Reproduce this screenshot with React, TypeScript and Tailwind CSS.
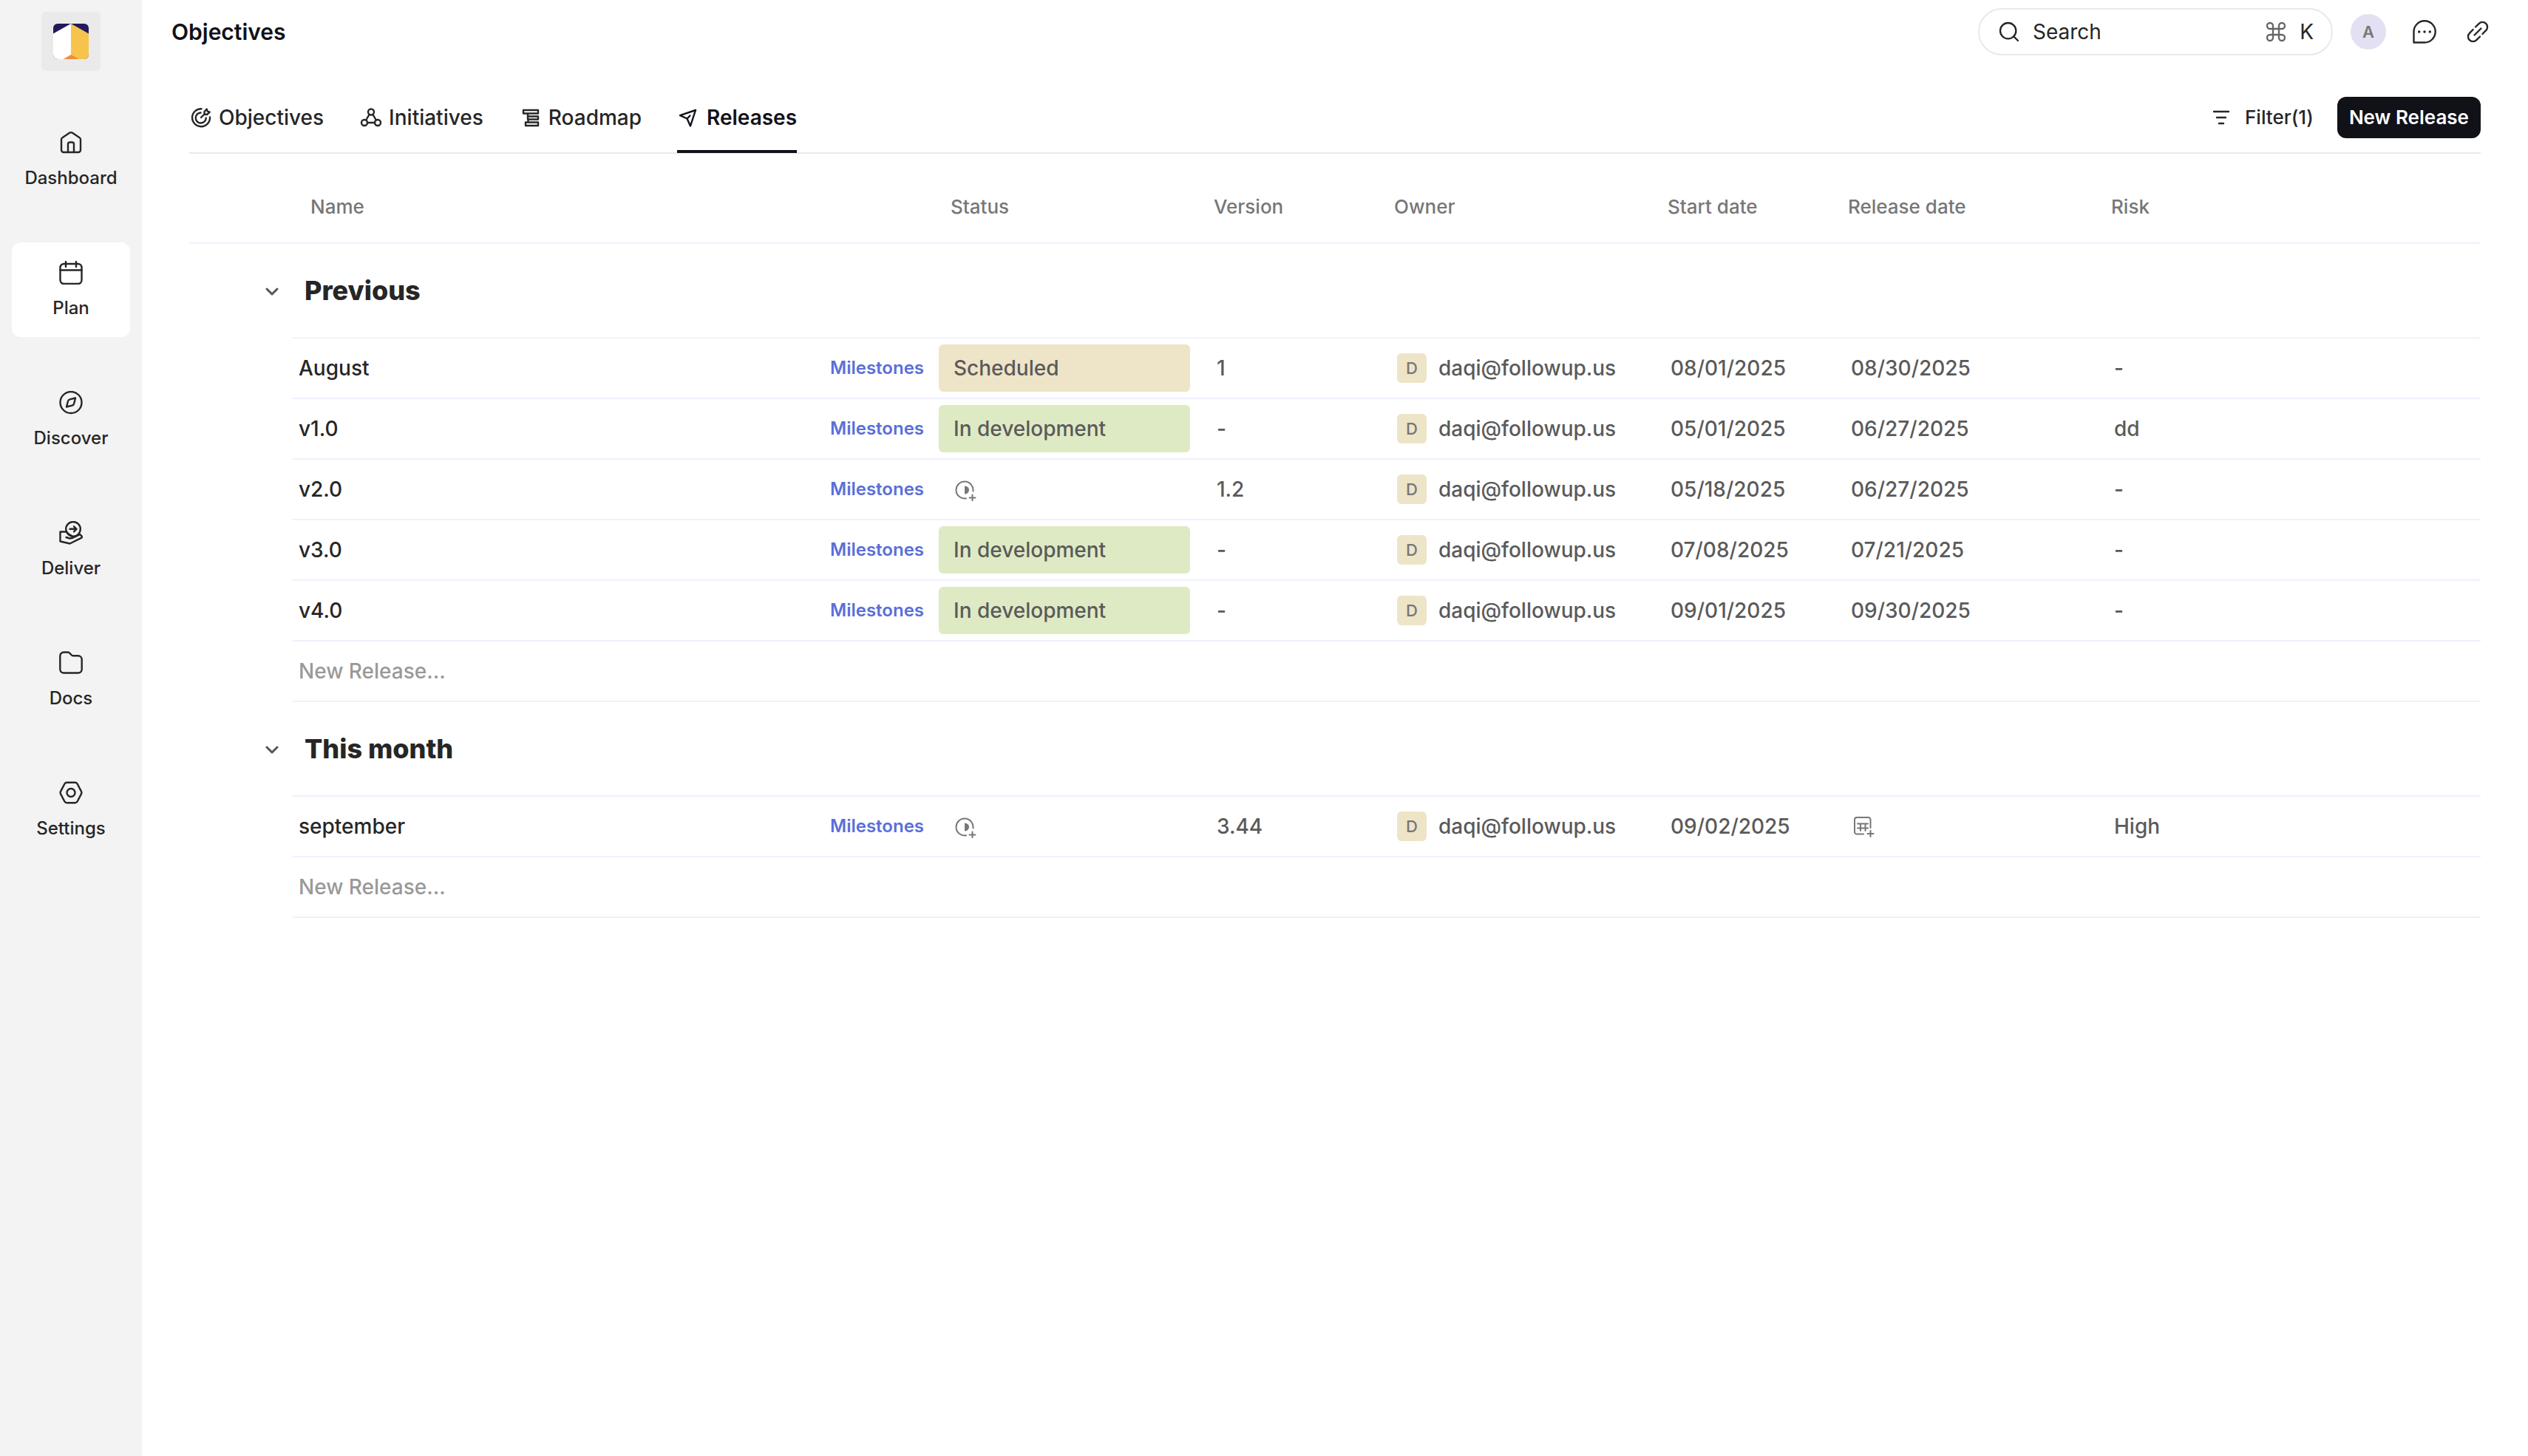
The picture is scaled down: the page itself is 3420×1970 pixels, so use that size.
import type { ReactNode } from 'react';
import { Command, Search } from 'lucide-react';

type Status = 'Scheduled' | 'In development' | null;

interface Release {
  name: string;
  status: Status;
  version: string;
  owner: string;
  start: string;
  release: string | null;
  risk: string;
}

const OWNER = 'daqi@followup.us';

const groups: { title: string; releases: Release[] }[] = [
  {
    title: 'Previous',
    releases: [
      { name: 'August', status: 'Scheduled', version: '1', owner: OWNER, start: '08/01/2025', release: '08/30/2025', risk: '-' },
      { name: 'v1.0', status: 'In development', version: '-', owner: OWNER, start: '05/01/2025', release: '06/27/2025', risk: 'dd' },
      { name: 'v2.0', status: null, version: '1.2', owner: OWNER, start: '05/18/2025', release: '06/27/2025', risk: '-' },
      { name: 'v3.0', status: 'In development', version: '-', owner: OWNER, start: '07/08/2025', release: '07/21/2025', risk: '-' },
      { name: 'v4.0', status: 'In development', version: '-', owner: OWNER, start: '09/01/2025', release: '09/30/2025', risk: '-' },
    ],
  },
  {
    title: 'This month',
    releases: [
      { name: 'september', status: null, version: '3.44', owner: OWNER, start: '09/02/2025', release: null, risk: 'High' },
    ],
  },
];

const statusColors = {
  Scheduled: 'bg-[#eee4c8]',
  'In development': 'bg-[#deeac4]',
};

function Icon({ children, stroke = 2 }: { children: ReactNode; stroke?: number }) {
  return (
    <svg
      className="size-8 shrink-0"
      viewBox="0 0 32 32"
      fill="none"
      stroke="currentColor"
      strokeWidth={stroke}
      strokeLinecap="round"
      strokeLinejoin="round"
      aria-hidden="true"
    >
      {children}
    </svg>
  );
}

const navItems = [
  {
    label: 'Dashboard',
    icon: (
      <>
        <path d="M3 11.8c0-1 .5-2 1.400-2.500L14.400 2.600c1-.6 2.200-.6 3.200 0l10 6.700c.9.500 1.400 1.500 1.400 2.500V26a3 3 0 0 1-3 3H6a3 3 0 0 1-3-3z" />
        <path d="M12 29V18a2.500 2.500 0 0 1 2.500-2.500h3A2.500 2.500 0 0 1 20 18v11" />
      </>
    ),
  },
  {
    label: 'Plan',
    active: true,
    icon: (
      <>
        <rect x="1.500" y="4" width="29" height="27" rx="5" />
        <path d="M1.500 12.500h29M9 1v7M23 1v7" />
      </>
    ),
  },
  {
    label: 'Discover',
    icon: (
      <>
        <circle cx="16" cy="15.500" r="14.500" />
        <path d="M22 9.500l-1.800 7.500a3.500 3.500 0 0 1-2.600 2.600L10 21.500l1.900-7.500a3.500 3.500 0 0 1 2.600-2.600z" />
      </>
    ),
  },
  {
    label: 'Deliver',
    icon: (
      <>
        <circle cx="19" cy="10.800" r="9.800" />
        <path d="M14.500 10.800h9M20 7.300l3.500 3.500-3.500 3.500" />
        <path d="M9.500 22l5 1.500 4-.8c3.500-1.500 6.500-2.900 9.700-4.700l2.300 2.300c.6 1 .3 2-.6 2.600L14.500 30.500 1.500 27.500V14.500h8.500c2 2.500 3.500 4.500 7 5.500l1 2.500" />
      </>
    ),
  },
  {
    label: 'Docs',
    icon: (
      <path d="M1.300 6.500a5 5 0 0 1 5-5h5.400c1 0 2 .4 2.700 1.200l2.300 2.600c.6.700 1.400 1 2.300 1h6.700a5 5 0 0 1 5 5V24.500a5 5 0 0 1-5 5H6.300a5 5 0 0 1-5-5z" />
    ),
  },
  {
    label: 'Settings',
    icon: (
      <>
        <path d="M10.600 1.800h10.800c1.400 0 2.600.7 3.300 1.900l5.200 9.900c.6 1.200.6 2.600 0 3.800l-5.200 9.900c-.7 1.200-1.900 1.900-3.300 1.900H10.600c-1.400 0-2.600-.7-3.300-1.900L2.100 17.400c-.6-1.200-.6-2.600 0-3.800l5.200-9.900c.7-1.200 1.900-1.900 3.300-1.900z" />
        <circle cx="16" cy="15.500" r="5.500" />
      </>
    ),
  },
];

const tabs = [
  {
    label: 'Objectives',
    icon: (
      <>
        <path d="M16.500 4.200A12 12 0 1 0 28 15.500M15.500 9.500A7 7 0 1 0 22.700 16.500" />
        <path d="M16 16l5-5M20.500 11.500V8l3.200-3.400 1 3 3 1L24 12z" />
      </>
    ),
  },
  {
    label: 'Initiatives',
    icon: (
      <>
        <circle cx="16" cy="8.500" r="4" />
        <circle cx="7" cy="23" r="4" />
        <circle cx="25" cy="23" r="4" />
        <path d="M11 23h10M13.500 12l-4.300 7.500M18.500 12l4.300 7.500" />
      </>
    ),
  },
  {
    label: 'Roadmap',
    icon: <path d="M6 6h20v4.500H6zM12 14.500h14v4H12zM9 22.500h17V27H9zM12 10.500v4M12.500 18.500v4" />,
  },
  {
    label: 'Releases',
    active: true,
    icon: <path d="M25 6L4 13.200l9.500 4.300L18 27.500zM13.500 17.500l4-4" />,
  },
];

function Sidebar() {
  return (
    <aside className="flex w-48 shrink-0 flex-col items-center bg-[#f3f3f3] pt-4">
      <a href="#home" aria-label="Home" className="flex size-20 items-center justify-center rounded-md bg-[#eaeaea]">
        <svg className="size-12 rounded-md" viewBox="0 0 48 48" aria-hidden="true">
          <path fill="#211a5b" d="M0 0h48v48H0z" />
          <path fill="#fff" d="M0 13.500L24 0v48H0z" />
          <path fill="#f6c44c" d="M24 0l24 13.500V48H24z" />
          <path fill="#f28c3c" d="M24 42l-10.500 6h21.500z" />
        </svg>
      </a>
      <nav className="mt-14 flex w-full flex-col gap-12 px-4">
        {navItems.map((item) => (
          <a
            key={item.label}
            href={`#${item.label.toLowerCase()}`}
            className={`flex h-32 flex-col items-center gap-[18px] rounded-xl pt-[25px] ${item.active ? 'bg-white' : ''}`}
          >
            <Icon stroke={2.4}>{item.icon}</Icon>
            <span className="text-[24px] leading-7 font-medium">{item.label}</span>
          </a>
        ))}
      </nav>
    </aside>
  );
}

function TopBar() {
  return (
    <header className="flex h-[86px] items-center pr-[52px] pl-10">
      <h1 className="text-[30px] leading-9 font-semibold text-[#111118]">Objectives</h1>
      <label className="ml-auto flex h-16 w-[480px] items-center rounded-full border-2 border-[#e9e9e9] px-6">
        <Search className="size-8 shrink-0" strokeWidth={1.75} />
        <input
          type="search"
          aria-label="Search"
          placeholder="Search"
          className="ml-4 min-w-0 flex-1 bg-transparent text-[28px] leading-9 outline-none placeholder:text-[#262626]"
        />
        <Command className="size-8 shrink-0 text-[#666]" strokeWidth={1.75} />
        <kbd className="ml-4 font-[Inter,sans-serif] text-[28px] leading-9">K</kbd>
      </label>
      <button className="ml-6 flex size-12 items-center justify-center rounded-full bg-[#e4e0f3] text-[22px] font-semibold text-[#777]">
        A
      </button>
      <button aria-label="Messages" className="ml-9">
        <Icon stroke={2.4}>
          <path d="M1.500 30.500V16.200A14.600 14.600 0 1 1 16 30.500z" />
          <path d="M8.700 16h.01M16 16h.01M23.300 16h.01" strokeWidth="3.500" />
        </Icon>
      </button>
      <button aria-label="Copy link" className="ml-10">
        <Icon stroke={2.4}>
          <path d="M13 9.500l4.700-4.700a6.600 6.600 0 0 1 9.400 9.400L22.400 19M19 22.500l-4.700 4.700a6.600 6.600 0 0 1-9.400-9.400L9.600 13M11.500 20.500l9-9" />
        </Icon>
      </button>
    </header>
  );
}

function Tabs() {
  return (
    <div className="flex h-[122px] border-b-2 border-[#e9e9e9]">
      <nav className="flex gap-12">
        {tabs.map((tab) => (
          <a
            key={tab.label}
            href={`#${tab.label.toLowerCase()}`}
            className={`-mb-px flex items-center gap-2 border-b-4 pt-7 text-[28px] leading-9 ${
              tab.active ? 'border-[#111118] font-semibold text-[#111118]' : 'border-transparent font-medium'
            }`}
          >
            <Icon stroke={2.4}>{tab.icon}</Icon>
            {tab.label}
          </a>
        ))}
      </nav>
      <div className="ml-auto flex items-center gap-8 pt-[26px]">
        <button className="flex items-center gap-4 text-[26px] leading-8 font-medium">
          <Icon stroke={2.4}>
            <path d="M6 8h20M10 16h12M13 24h6" />
          </Icon>
          Filter(1)
        </button>
        <button className="h-14 rounded-xl bg-[#111118] px-4 text-[26px] leading-8 font-semibold text-white">
          New Release
        </button>
      </div>
    </div>
  );
}

function StatusCell({ status }: { status: Status }) {
  if (!status) {
    return (
      <button aria-label="Set status" className="ml-5 flex text-[#777]">
        <Icon>
          <path d="M17 28.300A11.500 11.500 0 1 1 26.400 18.500M25.500 23.500v8M21.500 27.500h8" />
          <path d="M15 11.500a6 5.500 0 0 1 0 11z" fill="currentColor" stroke="none" />
        </Icon>
      </button>
    );
  }
  return (
    <div className={`flex h-16 w-[340px] items-center rounded-md px-5 ${statusColors[status]}`}>{status}</div>
  );
}

function ReleaseRow({ item }: { item: Release }) {
  const cell = 'h-[82px] border-b-2 border-[#eff1fd] p-0 pl-[22px]';
  return (
    <tr>
      <td className="p-0" />
      <td className="h-[82px] border-b-2 border-[#eff1fd] p-0 pr-[18px] pl-2">
        <div className="flex items-center justify-between">
          <span className="text-[#262626]">{item.name}</span>
          <a href="#milestones" className="text-[24px] leading-8 font-semibold text-[#5a6fd8]">
            Milestones
          </a>
        </div>
      </td>
      <td className="h-[82px] border-b-2 border-[#eff1fd] p-0 pl-0.5">
        <StatusCell status={item.status} />
      </td>
      <td className={cell}>{item.version}</td>
      <td className={cell}>
        <div className="flex items-center gap-4">
          <span className="flex size-10 items-center justify-center rounded-md bg-[#eee4c8] text-[22px] text-[#777]">
            D
          </span>
          {item.owner}
        </div>
      </td>
      <td className={cell}>{item.start}</td>
      <td className={cell}>
        {item.release ?? (
          <button aria-label="Set release date" className="flex text-[#777]">
            <Icon>
              <path d="M17 26.500H8A3 3 0 0 1 5 23.500V7a3 3 0 0 1 3-3h15.500a3 3 0 0 1 3 3v11M26.500 22v8M22.500 26h8" />
              <path d="M9 12.500h14M9 18.500h14M13 12.500v9.500M19.500 12.500v9.500" />
            </Icon>
          </button>
        )}
      </td>
      <td className={cell}>{item.risk}</td>
    </tr>
  );
}

function ReleaseTable() {
  return (
    <table className="w-full table-fixed border-separate border-spacing-0 text-left text-[28px] leading-9 font-medium text-[#5a5a5a]">
      <colgroup>
        <col className="w-[140px]" />
        <col className="w-[872px]" />
        <col className="w-[356px]" />
        <col className="w-[244px]" />
        <col className="w-[370px]" />
        <col className="w-[244px]" />
        <col className="w-[356px]" />
        <col />
      </colgroup>
      <thead className="text-[26px] text-[#777]">
        <tr>
          <td className="h-[122px] border-b-2 border-[#eff1fd] p-0" />
          <th className="border-b-2 border-[#eff1fd] p-0 pt-6 pl-6 font-medium">Name</th>
          {['Status', 'Version', 'Owner', 'Start date', 'Release date', 'Risk'].map((label) => (
            <th key={label} className="border-b-2 border-[#eff1fd] p-0 pt-6 pl-[18px] font-medium">
              {label}
            </th>
          ))}
        </tr>
      </thead>
      {groups.map((group) => (
        <tbody key={group.title}>
          <tr>
            <td className="h-32 p-0 pr-3">
              <button aria-label={`Collapse ${group.title}`} className="ml-auto flex text-[#555]">
                <Icon stroke={3}>
                  <path d="M9 13l7 7 7-7" />
                </Icon>
              </button>
            </td>
            <th colSpan={7} className="border-b-2 border-[#eff1fd] p-0 pl-4">
              <h2 className="text-[36px] leading-10 font-extrabold text-[#262626]">{group.title}</h2>
            </th>
          </tr>
          {group.releases.map((item) => (
            <ReleaseRow key={item.name} item={item} />
          ))}
          <tr>
            <td className="p-0" />
            <td colSpan={7} className="h-[82px] border-b-2 border-[#eff1fd] p-0 pl-2">
              <input
                aria-label={`New release in ${group.title}`}
                placeholder="New Release..."
                className="w-full bg-transparent outline-none placeholder:text-[#999]"
              />
            </td>
          </tr>
        </tbody>
      ))}
    </table>
  );
}

export default function App() {
  return (
    <div className="flex min-h-screen bg-white font-[Inter,sans-serif] text-[#262626]">
      <Sidebar />
      <div className="min-w-0 flex-1">
        <TopBar />
        <main className="px-16">
          <Tabs />
          <ReleaseTable />
        </main>
      </div>
    </div>
  );
}
